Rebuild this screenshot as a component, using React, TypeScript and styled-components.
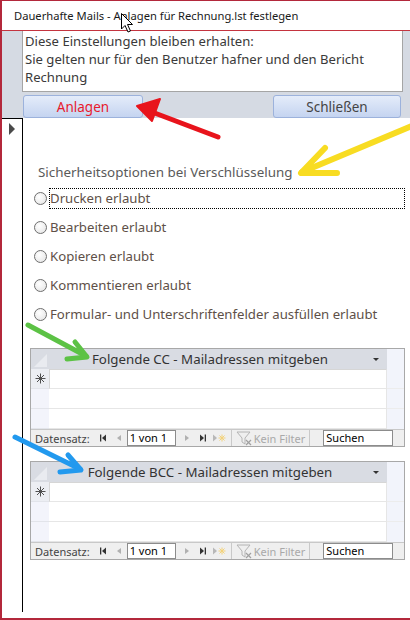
import styled, { createGlobalStyle } from 'styled-components';

const GlobalStyle = createGlobalStyle`
  body {
    margin: 0;
    background: #ffffff;
    font-family: "Noto Sans", "Open Sans", sans-serif;
  }
`;

const Page = styled.div`
  position: relative;
  width: 410px;
  height: 620px;
  overflow: hidden;
`;

const Window = styled.div`
  box-sizing: border-box;
  width: 410px;
  height: 620px;
  display: flex;
  flex-direction: column;
  background: #ffffff;
  border-left: 2px solid #b3283b;
  border-top: 1px solid #b3283b;
  border-bottom: 2px solid #b3283b;
`;

const TitleBar = styled.div`
  height: 29px;
  flex: none;
  display: flex;
  align-items: center;
  padding-left: 12px;
  border-bottom: 1px solid #c4343f;
  font-size: 11.2px;
  color: #1a1a1a;
`;

const Header = styled.div`
  flex: none;
  height: 87px;
  box-sizing: border-box;
  background: #d5dae3;
  padding: 0 7px 0 20px;
`;

const InfoBox = styled.div`
  box-sizing: border-box;
  height: 61px;
  background: #ffffff;
  border: 1px solid #a5a5a5;
  border-top: none;
  padding: 1px 2px;
  font-size: 13.1px;
  line-height: 18px;
  color: #3a3a3a;
`;

const ButtonRow = styled.div`
  display: flex;
  justify-content: space-between;
  margin-top: 3px;
  padding: 0 2px 0 1px;
`;

const Button = styled.button<{ $width: number; $color: string }>`
  width: ${({ $width }) => $width}px;
  height: 23px;
  padding: 0;
  border: 1px solid #9cb2dc;
  border-radius: 3px;
  background: linear-gradient(#e4ecfa, #c5d4f0);
  font-family: inherit;
  font-size: 13.5px;
  color: ${({ $color }) => $color};
`;

const Body = styled.div`
  flex: 1;
  display: flex;
`;

const SelectorColumn = styled.div`
  width: 20px;
  flex: none;
  border-right: 1px solid #000000;
  margin-bottom: 6px;
`;

const SelectorCell = styled.div`
  height: 15px;
  border-top: 1px solid #000000;
  display: flex;
  align-items: center;
  justify-content: center;
  padding-top: 2px;

  &::before {
    content: '';
    border-left: 6px solid #4a4a4a;
    border-top: 6px solid transparent;
    border-bottom: 6px solid transparent;
  }
`;

const Content = styled.div`
  flex: 1;
  padding-right: 5px;
`;

const SectionLabel = styled.div`
  margin: 45px 0 3px 15px;
  height: 18px;
  line-height: 18px;
  font-size: 13.4px;
  color: #5a5a5a;
`;

const OptionRow = styled.div`
  height: 29px;
  display: flex;
  align-items: center;
  padding-left: 11px;
`;

const Radio = styled.span`
  width: 11px;
  height: 11px;
  flex: none;
  border: 1px solid #6e6e6e;
  border-radius: 50%;
  background: radial-gradient(circle at 40% 35%, #ffffff, #e2e2e2);
  margin-right: 2px;
`;

const OptionLabel = styled.span<{ $focus?: boolean }>`
  flex: 1;
  height: 19px;
  line-height: 19px;
  border: 1px dotted ${({ $focus }) => ($focus ? '#000000' : 'transparent')};
  font-size: 13.2px;
  color: #5e5048;
`;

const Subform = styled.div<{ $top: number }>`
  margin: ${({ $top }) => $top}px 0 0 7px;
  width: 373px;
  border: 1px solid #a8a8a8;
  background: #ffffff;
`;

const GridRow = styled.div<{ $height: number }>`
  display: flex;
  height: ${({ $height }) => $height}px;
`;

const CornerCell = styled.div`
  width: 18px;
  flex: none;
  background: #d9dce3;
  position: relative;
  overflow: hidden;

  &::after {
    content: '';
    position: absolute;
    right: 2px;
    bottom: 2px;
    border-right: 13px solid #e9ebf0;
    border-top: 13px solid transparent;
  }
`;

const ColumnTitle = styled.div`
  flex: 1;
  position: relative;
  background: #d9dce3;
  display: flex;
  align-items: center;
  justify-content: center;
  padding-right: 16px;
  font-size: 13.3px;
  color: #333333;
`;

const DropArrow = styled.span`
  position: absolute;
  right: 8px;
  top: 9px;
  border-top: 3px solid #333333;
  border-left: 3px solid transparent;
  border-right: 3px solid transparent;
`;

const Filler = styled.div<{ $line?: boolean }>`
  width: 17px;
  flex: none;
  background: #f2f4fb;
  border-bottom: ${({ $line }) => ($line ? '1px solid #ececec' : 'none')};
  box-sizing: border-box;
`;

const RowSelector = styled.div<{ $new?: boolean }>`
  width: 18px;
  flex: none;
  box-sizing: border-box;
  background: ${({ $new }) => ($new ? '#eceef3' : '#f3f4fb')};
  border-bottom: 1px solid #e2e4ea;
  display: flex;
  align-items: center;
  justify-content: center;
`;

const DataCell = styled.div<{ $new?: boolean }>`
  flex: 1;
  box-sizing: border-box;
  border-bottom: 1px solid #e6e6e6;
  border-right: 1px solid #e6e6e6;
  border-left: ${({ $new }) => ($new ? '1px solid #d6d6d6' : 'none')};
  border-top: ${({ $new }) => ($new ? '1px solid #d6d6d6' : 'none')};
`;

const NavBar = styled.div`
  height: 17px;
  box-sizing: border-box;
  display: flex;
  align-items: center;
  background: #efefef;
  border-top: 1px solid #c8c8c8;
  padding-left: 4px;
  font-size: 11px;
  color: #444444;
`;

const NavText = styled.span`
  margin-right: 5px;
`;

const NavIcon = styled.span`
  display: inline-flex;
  width: 16px;
  justify-content: center;
`;

const NavInput = styled.span<{ $width: number; $gap?: number }>`
  box-sizing: border-box;
  width: ${({ $width }) => $width}px;
  height: 16px;
  line-height: 14px;
  margin-left: ${({ $gap }) => $gap ?? 0}px;
  background: #ffffff;
  border: 1px solid #8c8c8c;
  padding-left: 2px;
  color: #000000;
`;

const NavSep = styled.span`
  width: 1px;
  height: 16px;
  background: #c9c9c9;
  margin: 0 4px;
`;

const FilterText = styled.span`
  color: #a9a9a9;
  display: inline-flex;
  align-items: center;
  gap: 1px;
`;

const Overlay = styled.svg`
  position: absolute;
  left: 0;
  top: 0;
  pointer-events: none;
`;

const Asterisk = () => (
  <svg width="11" height="11" viewBox="0 0 11 11">
    <g stroke="#505050" strokeWidth="1">
      <line x1="5.5" y1="0.5" x2="5.5" y2="10.5" />
      <line x1="0.5" y1="5.5" x2="10.5" y2="5.5" />
      <line x1="2" y1="2" x2="9" y2="9" />
      <line x1="9" y1="2" x2="2" y2="9" />
    </g>
  </svg>
);

const FirstIcon = () => (
  <svg width="8" height="8" viewBox="0 0 8 8">
    <rect x="1" y="0.5" width="1.3" height="7" fill="#333" />
    <polygon points="7,0.5 3,4 7,7.5" fill="#333" />
  </svg>
);

const PrevIcon = () => (
  <svg width="8" height="8" viewBox="0 0 8 8">
    <polygon points="6,1 2,4 6,7" fill="#b0b0b0" />
  </svg>
);

const NextIcon = () => (
  <svg width="8" height="8" viewBox="0 0 8 8">
    <polygon points="2,1 6,4 2,7" fill="#b0b0b0" />
  </svg>
);

const LastIcon = () => (
  <svg width="8" height="8" viewBox="0 0 8 8">
    <polygon points="1,0.5 5,4 1,7.5" fill="#333" />
    <rect x="5.7" y="0.5" width="1.3" height="7" fill="#333" />
  </svg>
);

const NewIcon = () => (
  <svg width="14" height="10" viewBox="0 0 14 10">
    <polygon points="1,1.5 5,5 1,8.5" fill="#b8b8b8" />
    <g stroke="#f3d27a" strokeWidth="1">
      <line x1="10" y1="1.5" x2="10" y2="8.5" />
      <line x1="6.5" y1="5" x2="13.5" y2="5" />
      <line x1="7.5" y1="2.5" x2="12.5" y2="7.5" />
      <line x1="12.5" y1="2.5" x2="7.5" y2="7.5" />
    </g>
  </svg>
);

const FunnelIcon = () => (
  <svg width="17" height="16" viewBox="0 0 17 16">
    <path d="M1 2 H14 L9 8 V14 L6 12 V8 Z" fill="none" stroke="#b4b4b4" strokeWidth="1" />
    <g stroke="#a0a0a0" strokeWidth="1.2">
      <line x1="10" y1="10" x2="15" y2="15" />
      <line x1="15" y1="10" x2="10" y2="15" />
    </g>
  </svg>
);

const Grid = ({ title, top }: { title: string; top: number }) => (
  <Subform $top={top}>
    <GridRow $height={20}>
      <CornerCell />
      <ColumnTitle>
        {title}
        <DropArrow />
      </ColumnTitle>
      <Filler />
    </GridRow>
    <GridRow $height={20}>
      <RowSelector $new>
        <Asterisk />
      </RowSelector>
      <DataCell $new />
      <Filler $line />
    </GridRow>
    <GridRow $height={20}>
      <RowSelector />
      <DataCell />
      <Filler $line />
    </GridRow>
    <GridRow $height={20}>
      <RowSelector />
      <DataCell />
      <Filler />
    </GridRow>
    <NavBar>
      <NavText>Datensatz:</NavText>
      <NavIcon>
        <FirstIcon />
      </NavIcon>
      <NavIcon>
        <PrevIcon />
      </NavIcon>
      <NavInput $width={49}>1 von 1</NavInput>
      <NavIcon style={{ marginLeft: 3 }}>
        <NextIcon />
      </NavIcon>
      <NavIcon>
        <LastIcon />
      </NavIcon>
      <NavIcon>
        <NewIcon />
      </NavIcon>
      <NavSep />
      <FilterText>
        <FunnelIcon />
        Kein Filter
      </FilterText>
      <NavSep />
      <NavInput $width={70} $gap={9}>
        Suchen
      </NavInput>
    </NavBar>
  </Subform>
);

const options = [
  'Drucken erlaubt',
  'Bearbeiten erlaubt',
  'Kopieren erlaubt',
  'Kommentieren erlaubt',
  'Formular- und Unterschriftenfelder ausfüllen erlaubt',
];

const App = () => (
  <Page>
    <GlobalStyle />
    <Window>
      <TitleBar>Dauerhafte Mails - Anlagen für Rechnung.lst festlegen</TitleBar>
      <Header>
        <InfoBox>
          Diese Einstellungen bleiben erhalten:
          <br />
          Sie gelten nur für den Benutzer hafner und den Bericht
          <br />
          Rechnung
        </InfoBox>
        <ButtonRow>
          <Button $width={120} $color="#e8192c">
            Anlagen
          </Button>
          <Button $width={128} $color="#444444">
            Schließen
          </Button>
        </ButtonRow>
      </Header>
      <Body>
        <SelectorColumn>
          <SelectorCell />
        </SelectorColumn>
        <Content>
          <SectionLabel>Sicherheitsoptionen bei Verschlüsselung</SectionLabel>
          {options.map((text, i) => (
            <OptionRow key={text}>
              <Radio />
              <OptionLabel $focus={i === 0}>{text}</OptionLabel>
            </OptionRow>
          ))}
          <Grid title="Folgende CC - Mailadressen mitgeben" top={19} />
          <Grid title="Folgende BCC - Mailadressen mitgeben" top={14} />
        </Content>
      </Body>
    </Window>
    <Overlay width="410" height="620" viewBox="0 0 410 620">
      <g strokeLinecap="round" strokeLinejoin="round" fill="none">
        <line x1="218" y1="137" x2="152" y2="112" stroke="#e8141c" strokeWidth="5" />
        <polygon points="137,106 160,99 152,121" fill="#e8141c" stroke="#e8141c" strokeWidth="2" />
        <line x1="412" y1="126" x2="302" y2="172" stroke="#f8dc22" strokeWidth="6" />
        <polyline points="325,148 301,173 337,173" stroke="#f8dc22" strokeWidth="6" />
        <line x1="28" y1="325" x2="86" y2="356" stroke="#5cc245" strokeWidth="5" />
        <polyline points="75,342 87,357 67,359" stroke="#5cc245" strokeWidth="5" />
        <line x1="15" y1="437" x2="80" y2="469" stroke="#2299ee" strokeWidth="5" />
        <polyline points="68,455 81,470 60,472" stroke="#2299ee" strokeWidth="5" />
      </g>
      <path
        d="M121.5 13.5 V29 L125 25.5 L128 32 L130.5 31 L127.5 24.5 L132.5 24.5 Z"
        fill="#ffffff"
        stroke="#000000"
        strokeWidth="1"
      />
    </Overlay>
  </Page>
);

export default App;
